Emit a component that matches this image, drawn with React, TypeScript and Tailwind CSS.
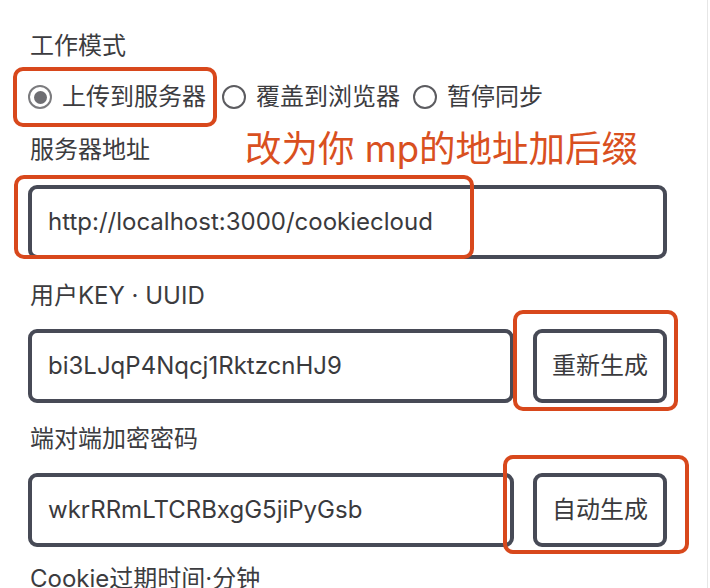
import React from 'react';

const FONT = "font-['Inter','Noto_Sans_CJK_SC',sans-serif]";

const Radio = ({ label, checked = false }: { label: string; checked?: boolean }) => (
  <label className="flex items-center">
    <span
      className={
        checked
          ? 'w-6 h-6 rounded-full border-[2.5px] border-[#7b7b7e] flex items-center justify-center'
          : 'w-6 h-6 rounded-full border-2 border-[#5c5c60]'
      }
    >
      {checked && <span className="w-[13px] h-[13px] rounded-full bg-[#6e6e72]" />}
    </span>
    <span className="ml-[10px] text-[24px] leading-8">{label}</span>
  </label>
);

const Field = ({ value, button, width }: { value: string; button?: string; width: string }) => (
  <div className="flex items-center">
    <div
      className={`${width} h-[74px] border-4 border-[#474a56] rounded-[9px] flex items-center pl-4 text-[24px] text-[#3a3a3d]`}
    >
      {value}
    </div>
    {button && (
      <button className="ml-[19px] w-[134px] h-[74px] border-4 border-[#474a56] rounded-[9px] flex items-center justify-center text-[24px] text-[#3a3a3d]">
        {button}
      </button>
    )}
  </div>
);

export default function App() {
  return (
    <div className={`relative w-[710px] h-[588px] overflow-hidden bg-white text-[#3c3c3f] ${FONT}`}>
      <div className="absolute top-0 right-[2px] w-px h-full bg-[#e6e6e6]" />

      <div className="flex flex-col pl-7 pt-[30px]">
        <div className="pl-[2px] text-[24px] leading-8">工作模式</div>

        <div className="mt-[19px] h-8 flex items-center">
          <Radio label="上传到服务器" checked />
          <div className="ml-[16px]">
            <Radio label="覆盖到浏览器" />
          </div>
          <div className="ml-[13px]">
            <Radio label="暂停同步" />
          </div>
        </div>

        <div className="mt-[21px] pl-[2px] text-[24px] leading-8">服务器地址</div>
        <div className="mt-[19px]">
          <Field value="http://localhost:3000/cookiecloud" width="w-[639px]" />
        </div>

        <div className="mt-[21px] pl-[2px] text-[24px] leading-8">用户KEY · UUID</div>
        <div className="mt-[17px]">
          <Field value="bi3LJqP4Nqcj1RktzcnHJ9" button="重新生成" width="w-[486px]" />
        </div>

        <div className="mt-[20px] pl-[2px] text-[24px] leading-8">端对端加密密码</div>
        <div className="mt-[18px]">
          <Field value="wkrRRmLTCRBxgG5jiPyGsb" button="自动生成" width="w-[486px]" />
        </div>

        <div className="mt-[16px] pl-[2px] text-[24px] leading-8">Cookie过期时间·分钟</div>
      </div>

      {/* annotation overlays */}
      <div className="absolute left-[13px] top-[67px] w-[204px] h-[60px] border-[4px] border-[#d8481c] rounded-[10px]" />
      <div className="absolute left-[14px] top-[175px] w-[460px] h-[84px] border-[4px] border-[#d8481c] rounded-[10px]" />
      <div className="absolute left-[513px] top-[310px] w-[165px] h-[101px] border-[4px] border-[#d8481c] rounded-[10px]" />
      <div className="absolute left-[503px] top-[455px] w-[186px] h-[99px] border-[4px] border-[#d8481c] rounded-[10px]" />
      <div className="absolute left-[245px] top-[131px] text-[36.5px] leading-9 text-[#d9501f] whitespace-nowrap">
        改为你 mp的地址加后缀
      </div>
    </div>
  );
}
